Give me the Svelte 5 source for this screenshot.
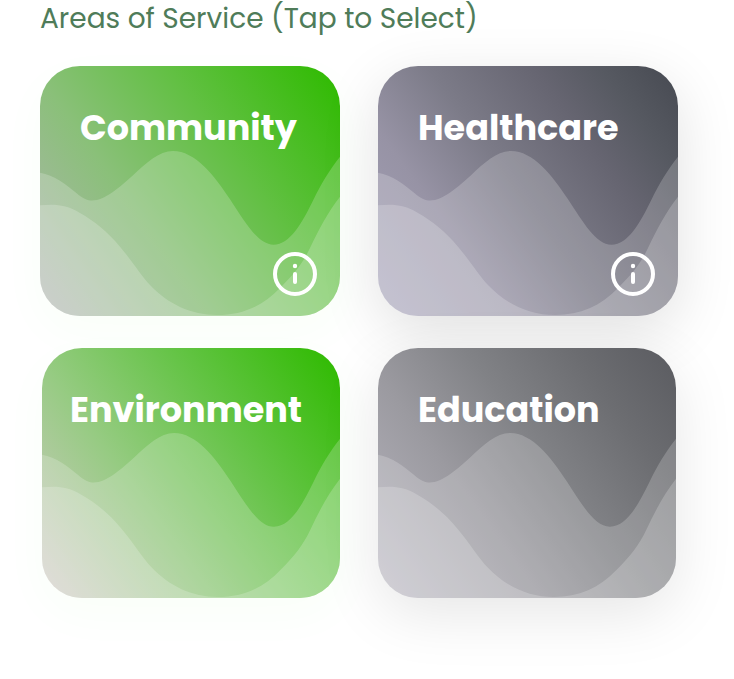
<script>
  const rows = [
    [
      { name: 'Community', tone: 'community', info: true },
      { name: 'Healthcare', tone: 'healthcare', info: true }
    ],
    [
      { name: 'Environment', tone: 'environment', info: false },
      { name: 'Education', tone: 'education', info: false }
    ]
  ];

  let selected = $state([]);

  function toggle(name) {
    selected = selected.includes(name)
      ? selected.filter((n) => n !== name)
      : [...selected, name];
  }
</script>

<main>
  <h1>Areas of Service (Tap to Select)</h1>
  <div class="rows">
    {#each rows as row, i}
      <div class="row" class:inset={i === 1}>
        {#each row as area}
          <div class="card {area.tone}">
            <svg class="waves" viewBox="0 0 300 250" preserveAspectRatio="none" aria-hidden="true">
              <path d="M0 106.7C14 109 27 119 36.700 127.300C43 133 48 134.500 52 134.500C65 134.500 80 121 93.300 109C106 97 119 85 133 85C155 85 174 109 190 133.300C205 156 218 178.700 233.500 178.700C250 178.700 262 157 273.300 134C281 118 290 103 300 90.700V250H0Z" />
              <path d="M0 139.300C14 138 26 138 40 147C54 155 67 165 80 180.700C93 196 102 211 110 219C128 238 151 249 177 249C202 249 223 240 240 222C254 208 263 197 270 182C279 163 288 146 300 130.700V250H0Z" />
            </svg>
            <button
              class="select"
              type="button"
              aria-pressed={selected.includes(area.name)}
              onclick={() => toggle(area.name)}
            >{area.name}</button>
            {#if area.info}
              <button class="info" type="button" aria-label="About {area.name}">
                <svg viewBox="0 0 44 44" aria-hidden="true">
                  <circle cx="22" cy="22" r="20" fill="none" stroke="#fff" stroke-width="4" />
                  <circle cx="22" cy="14" r="2.200" fill="#fff" />
                  <rect x="20" y="20" width="4" height="12" rx="2" fill="#fff" />
                </svg>
              </button>
            {/if}
          </div>
        {/each}
      </div>
    {/each}
  </div>
</main>

<style>
  :global(body) {
    margin: 0;
    background: #fff;
    font-family: Poppins, Inter, sans-serif;
  }

  main {
    padding: 0 56px 80px 40px;
  }

  h1 {
    margin: 0;
    font-size: 28px;
    line-height: 38px;
    font-weight: 400;
    color: #4f7c59;
  }

  .rows {
    display: flex;
    flex-direction: column;
    gap: 32px;
    margin-top: 28px;
  }

  .row {
    display: grid;
    grid-template-columns: repeat(2, minmax(0, 1fr));
    gap: 38px;
  }

  .row.inset {
    padding: 0 2px;
  }

  .card {
    position: relative;
    display: flex;
    min-height: 250px;
    border-radius: 40px;
  }

  .community {
    background: linear-gradient(54deg, #b2b4b4 0%, #8ac079 36%, #62c043 64%, #30bb02 98%);
    box-shadow: 0 16px 48px rgba(60, 255, 40, 0.03);
  }

  .environment {
    background: linear-gradient(54deg, #d3cac8 0%, #96cb82 36%, #66c448 64%, #30bb02 98%);
    box-shadow: 0 16px 48px rgba(60, 255, 40, 0.03);
  }

  .healthcare {
    background: linear-gradient(54deg, #a5a2b9 0%, #9793a5 28%, #7c7b88 48%, #666571 70%, #565961 84%, #464951 100%);
    box-shadow: 0 16px 60px rgba(0, 0, 0, 0.12);
  }

  .education {
    background: linear-gradient(54deg, #b8b6c0 0%, #9b9aa0 34%, #818286 56%, #6c6d71 78%, #5a5b60 100%);
    box-shadow: 0 16px 60px rgba(0, 0, 0, 0.1);
  }

  .waves {
    position: absolute;
    inset: 0;
    width: 100%;
    height: 100%;
    border-radius: 40px;
    fill: rgba(255, 255, 255, 0.2);
  }

  button {
    border: 0;
    background: none;
    font: inherit;
    color: #fff;
    cursor: pointer;
  }

  .select {
    position: relative;
    display: flex;
    flex: 1;
    align-items: flex-start;
    min-width: 0;
    padding: 40px;
    border-radius: 40px;
    font-size: 35px;
    line-height: 44px;
    font-weight: 700;
    text-align: left;
  }

  .environment .select {
    padding-left: 28px;
    padding-right: 28px;
  }

  .info {
    position: absolute;
    right: 23px;
    bottom: 20px;
    width: 44px;
    height: 44px;
    padding: 0;
    border-radius: 50%;
  }

  .info svg {
    display: block;
    width: 100%;
    height: 100%;
  }
</style>
